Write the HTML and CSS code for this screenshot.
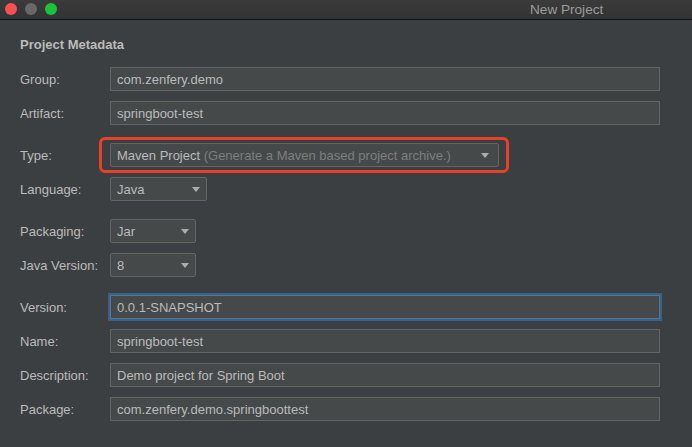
FILE: index.html
```html
<!DOCTYPE html>
<html>
<head>
<meta charset="utf-8">
<link rel="stylesheet" href="styles.css">
</head>
<body>
<div class="window">
  <div class="titlebar">
    <div class="lights">
      <span class="light red"></span>
      <span class="light gray"></span>
      <span class="light green"></span>
    </div>
    <div class="title">New Project</div>
  </div>
  <div class="content">
    <div class="section">Project Metadata</div>
    <div class="form">
      <div class="row">
        <div class="label">Group:</div>
        <div class="field wide">com.zenfery.demo</div>
      </div>
      <div class="row">
        <div class="label">Artifact:</div>
        <div class="field wide">springboot-test</div>
      </div>
      <div class="row spaced">
        <div class="label">Type:</div>
        <div class="field select type highlighted"><span class="val">Maven Project <span class="hint">(Generate a Maven based project archive.)</span></span><span class="arrow"></span></div>
      </div>
      <div class="row">
        <div class="label">Language:</div>
        <div class="field select lang"><span class="val">Java</span><span class="arrow"></span></div>
      </div>
      <div class="row spaced">
        <div class="label">Packaging:</div>
        <div class="field select small"><span class="val">Jar</span><span class="arrow"></span></div>
      </div>
      <div class="row">
        <div class="label">Java Version:</div>
        <div class="field select small"><span class="val">8</span><span class="arrow"></span></div>
      </div>
      <div class="row spaced">
        <div class="label">Version:</div>
        <div class="field wide focused">0.0.1-SNAPSHOT</div>
      </div>
      <div class="row">
        <div class="label">Name:</div>
        <div class="field wide">springboot-test</div>
      </div>
      <div class="row">
        <div class="label">Description:</div>
        <div class="field wide">Demo project for Spring Boot</div>
      </div>
      <div class="row">
        <div class="label">Package:</div>
        <div class="field wide">com.zenfery.demo.springboottest</div>
      </div>
    </div>
  </div>
</div>
</body>
</html>
```
FILE: styles.css
```css
* { box-sizing: border-box; }
html, body {
  margin: 0;
  padding: 0;
  background: #3c3f41;
  font-family: "Liberation Sans", Arial, sans-serif;
  font-size: 13px;
  color: #bbbbbb;
}
.window {
  width: 692px;
  height: 447px;
  background: #3c3f41;
  overflow: hidden;
}
.titlebar {
  height: 20px;
  background: linear-gradient(#3b3b3b, #323232);
  border-bottom: 1px solid #111111;
  display: flex;
  align-items: center;
  padding-left: 5px;
}
.lights {
  display: flex;
  gap: 8px;
  margin-top: -1px;
}
.light {
  width: 12px;
  height: 12px;
  border-radius: 50%;
  display: block;
}
.light.red { background: #fc4f4f; }
.light.gray { background: #686868; }
.light.green { background: #1ac43a; }
.title {
  margin-left: 473px;
  color: #9c9c9c;
  font-size: 13.6px;
  margin-top: -1px;
}
.content {
  padding: 17px 32px 0 20px;
}
.section {
  font-weight: bold;
  height: 16px;
  line-height: 16px;
  color: #bbbbbb;
  margin-bottom: 14px;
}
.form {
  display: flex;
  flex-direction: column;
  gap: 10px;
}
.row {
  display: flex;
  align-items: center;
  height: 24px;
}
.row.spaced { margin-top: 8px; }
.label {
  width: 90px;
  flex: none;
  color: #bbbbbb;
}
.field {
  height: 24px;
  background: #45494a;
  border: 1px solid #646464;
  padding: 0 6px;
  display: flex;
  align-items: center;
  color: #bbbbbb;
  white-space: nowrap;
}
.wide { width: 550px; }
.focused {
  border-color: #4d77a3;
  box-shadow: 0 0 0 2px #3d6186;
}
.select {
  border-radius: 2px;
  justify-content: space-between;
}
.select.type { width: 389px; padding-right: 9px; }
.select.lang { width: 97px; padding-right: 6px; }
.select.small { width: 86px; padding-right: 6px; }
.hint { color: #7d7f80; }
.arrow {
  width: 0;
  height: 0;
  border-left: 4.5px solid transparent;
  border-right: 4.5px solid transparent;
  border-top: 5px solid #acacac;
}
.highlighted { position: relative; }
.highlighted::after {
  content: "";
  position: absolute;
  left: -12px;
  right: -11px;
  top: -7px;
  bottom: -7px;
  border: 3px solid #e8402b;
  border-radius: 6px;
}
```
